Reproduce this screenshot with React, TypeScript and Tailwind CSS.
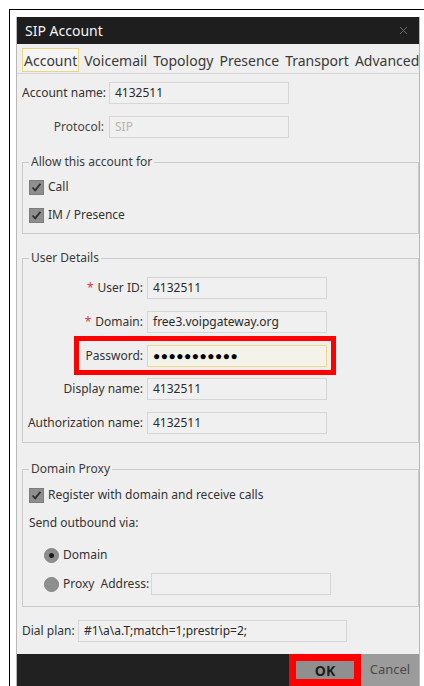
import React from "react";
import { X } from "lucide-react";

const font = { fontFamily: '"Segoe UI", "Noto Sans", "Open Sans", sans-serif' };

function Field({ value, width = "w-[180px]", muted = false, focused = false, dots = false }: { value: string; width?: string; muted?: boolean; focused?: boolean; dots?: boolean }) {
  return (
    <div
      className={`h-[22px] ${width} shrink-0 border ${focused ? "border-[#ecd98a] bg-[#f4f3ea]" : "border-[#d6d6d6] bg-[#f0f0f0]"} px-[5px] flex items-center ${muted ? "text-[#b4b4b4]" : "text-[#2a2a2a]"}`}
    >
      {dots ? <span className="text-[12px] tracking-[0.5px] text-black">●●●●●●●●●●●</span> : value}
    </div>
  );
}

function CheckBox() {
  return (
    <span className="w-[15px] h-[15px] bg-[#8e8e8e] border border-[#7d7d7d] flex items-center justify-center shrink-0">
      <svg width="11" height="11" viewBox="0 0 11 11">
        <path d="M1.5 5.5 L4.2 8.4 L9.5 1.8" fill="none" stroke="#2f2f2f" strokeWidth="1.8" />
      </svg>
    </span>
  );
}

function Radio({ on }: { on?: boolean }) {
  return (
    <span className="w-[15px] h-[15px] rounded-full bg-[#8e8e8e] border border-[#838383] flex items-center justify-center shrink-0">
      {on && <span className="w-[5px] h-[5px] rounded-full bg-[#1c1c1c]" />}
    </span>
  );
}

function Group({ title, className, children }: { title: string; className: string; children: React.ReactNode }) {
  return (
    <div className={`relative border border-[#cbcbcb] ${className}`}>
      <span className="absolute -top-[9px] left-[6px] px-[2px] bg-[#efefef] leading-[16px] text-[#3a3a3a]">{title}</span>
      {children}
    </div>
  );
}

function DetailRow({ label, value, required, focused, dots }: { label: string; value: string; required?: boolean; focused?: boolean; dots?: boolean }) {
  return (
    <div className="flex items-center h-[22px]">
      <span className="w-[124px] shrink-0 text-right pr-[4px] text-[#333]">
        {required && <span className="text-[#d9363e] mr-[4px]">*</span>}
        {label}
      </span>
      <Field value={value} focused={focused} dots={dots} />
    </div>
  );
}

export default function App() {
  const tabs = ["Voicemail", "Topology", "Presence", "Transport", "Advanced"];
  return (
    <div className="w-[424px] h-[686px] overflow-hidden bg-white text-[12px] whitespace-nowrap" style={font}>
      <div className="ml-[9px] mt-[9px] w-[440px] h-[700px] border-l border-t border-black pl-[6px] pt-[7px]">
        <div className="w-[404px] h-[680px] flex flex-col bg-[#efefef] border-x border-[#b8b8b8]">
          {/* title bar */}
          <div className="h-[27px] shrink-0 bg-[#1e1e1e] flex items-center justify-between pl-[8px] pr-[9px]">
            <span className="text-[14px] text-[#f3f3f3]">SIP Account</span>
            <X size={13} strokeWidth={1.6} color="#7a7a7a" />
          </div>

          {/* tabs */}
          <div className="h-[30px] shrink-0 border-b border-[#d6d6d6] flex items-start pt-[4px] pl-[5px] text-[14px] text-[#3a3a3a]">
            <span className="h-[24px] px-[1px] border border-[#edd57c] bg-[#f5f5f5] flex items-center">Account</span>
            {tabs.map((t) => (
              <span key={t} className="h-[24px] pl-[5px] pr-[1px] flex items-center">
                {t}
              </span>
            ))}
          </div>

          {/* form */}
          <div className="flex flex-col pl-[5px] shrink-0">
            <div className="flex items-center mt-[8px]">
              <span className="w-[84px] shrink-0 text-[#333]">Account name:</span>
              <span className="w-[3px]" />
              <Field value="4132511" />
            </div>
            <div className="flex items-center mt-[12px]">
              <span className="w-[84px] shrink-0 text-right pr-[2px] text-[#444]">Protocol:</span>
              <span className="w-[3px]" />
              <Field value="SIP" muted />
            </div>

            <Group title="Allow this account for" className="mt-[24px] w-[397px] pt-[12px] pb-[6px] pl-[6px]">
              <div className="flex flex-col gap-[4px]">
                <div className="h-[24px] flex items-center gap-[4px] text-[#333]">
                  <CheckBox />
                  <span>Call</span>
                </div>
                <div className="h-[24px] flex items-center gap-[4px] text-[#333]">
                  <CheckBox />
                  <span>IM / Presence</span>
                </div>
              </div>
            </Group>

            <Group title="User Details" className="mt-[24px] w-[397px] pt-[18px] pb-[8px]">
              <div className="flex flex-col gap-[11.75px]">
                <DetailRow label="User ID:" value="4132511" required />
                <DetailRow label="Domain:" value="free3.voipgateway.org" required />
                <div className="relative">
                  <DetailRow label="Password:" value="" focused dots />
                  <span className="absolute left-[51px] -top-[9px] w-[262px] h-[39px] border-[5px] border-[#ff0000]" />
                </div>
                <DetailRow label="Display name:" value="4132511" />
                <DetailRow label="Authorization name:" value="4132511" />
              </div>
            </Group>

            <Group title="Domain Proxy" className="mt-[26px] w-[397px] pt-[13px] pb-[11px] pl-[6px] text-[#333]">
              <div className="h-[24px] flex items-center gap-[4px]">
                <CheckBox />
                <span>Register with domain and receive calls</span>
              </div>
              <div className="h-[20px] mt-[6px] flex items-center">Send outbound via:</div>
              <div className="h-[24px] mt-[10px] pl-[15px] flex items-center gap-[4px]">
                <Radio on />
                <span>Domain</span>
              </div>
              <div className="h-[22px] mt-[6px] pl-[15px] flex items-center">
                <Radio />
                <span className="ml-[4px]">Proxy</span>
                <span className="ml-[6px] w-[51px]">Address:</span>
                <Field value="" />
              </div>
            </Group>

            <div className="flex items-center mt-[13px]">
              <span className="w-[53px] shrink-0 text-[#333]">Dial plan:</span>
              <span className="w-[3px]" />
              <Field value="#1\a\a.T;match=1;prestrip=2;" width="w-[269px]" />
            </div>
          </div>

          {/* button bar */}
          <div className="mt-[12px] flex-1 bg-[#212121] flex justify-end">
            <div className="relative w-[72px] h-[32px] bg-[#8f8f8f] flex items-center justify-center font-bold text-[14px] text-[#1e1e1e]">
              OK
              <span className="absolute inset-0 border-[7px] border-[#ff0000]" />
            </div>
            <div className="w-[58px] h-[32px] bg-[#9b9b9b] flex items-center justify-center text-[13px] text-[#4a4a4a]">
              Cancel
            </div>
          </div>
        </div>
      </div>
    </div>
  );
}
